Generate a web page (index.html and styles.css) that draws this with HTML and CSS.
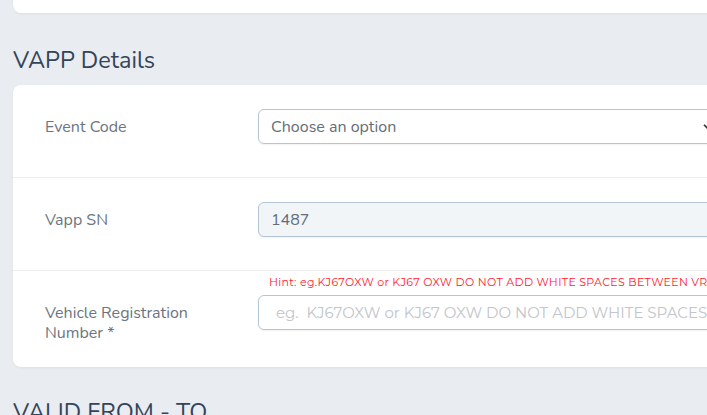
FILE: index.html
```html
<!DOCTYPE html>
<html>
<head>
<meta charset="utf-8">
<link rel="stylesheet" href="styles.css">
</head>
<body>
<div class="page">
  <div class="card card-top"></div>
  <h2 class="section-title">VAPP Details</h2>
  <div class="card">
    <div class="row">
      <label class="label">Event Code</label>
      <div class="field">
        <div class="control select">
          <span>Choose an option</span>
          <svg class="chev" width="9" height="7" viewBox="0 0 10 8"><path d="M1 2 L5 6 L9 2" fill="none" stroke="#333" stroke-width="2"/></svg>
        </div>
      </div>
    </div>
    <div class="row">
      <label class="label">Vapp SN</label>
      <div class="field">
        <div class="control readonly"><span>1487</span></div>
      </div>
    </div>
    <div class="row row-last">
      <label class="label">Vehicle Registration Number *</label>
      <div class="field">
        <div class="hint">Hint: eg.KJ67OXW or KJ67 OXW DO NOT ADD WHITE SPACES BETWEEN VRN CHARACTERS</div>
        <div class="control"><span class="ph">eg.&nbsp; KJ67OXW or KJ67 OXW DO NOT ADD WHITE SPACES BETWEEN VRN</span></div>
      </div>
    </div>
  </div>
  <h2 class="section-title second">VALID FROM - TO</h2>
</div>
</body>
</html>
```
FILE: styles.css
```css
html, body {
  margin: 0;
  padding: 0;
  background: #e9edf1;
  overflow: hidden;
}
body {
  font-family: "Nunito", "Open Sans", sans-serif;
}
.page {
  width: 737px;
  padding: 0 0 0 13px;
  margin-top: -20px;
}
.card {
  background: #fff;
  border-radius: 8px;
  box-shadow: 0 1px 3px rgba(0,0,0,0.06);
}
.card-top {
  height: 33px;
}
.section-title {
  margin: 0;
  font-family: "Nunito", "Open Sans", sans-serif;
  font-weight: 400;
  font-size: 23.5px;
  color: #34445a;
  padding: 33px 0 11px 0;
  line-height: 28px;
}
.section-title.second {
  padding-top: 31px;
}
.row {
  display: flex;
  align-items: center;
  padding: 24px 0 33px 32px;
  border-bottom: 1px solid #eceef0;
}
.row-last {
  border-bottom: none;
  padding: 5px 0 0 32px;
  height: 91px;
  align-items: flex-start;
}
.label {
  flex: 0 0 213px;
  font-size: 16px;
  color: #6b7580;
  line-height: 20px;
}
.row-last .label {
  flex: 0 0 170px;
  padding-top: 27px;
  margin-right: 43px;
}
.field {
  flex: 1;
  min-width: 0;
  padding-right: 25px;
}
.control {
  height: 33px;
  border: 1px solid #b4c6d6;
  border-radius: 6px;
  display: flex;
  align-items: center;
  padding: 0 12px;
  font-size: 16px;
  color: #646d78;
  box-shadow: 0 1px 2px rgba(0,0,0,0.06);
  overflow: hidden;
  white-space: nowrap;
}
.select {
  justify-content: space-between;
}
.readonly {
  background: #f1f5f8;
}
.hint {
  font-family: "Montserrat", "Open Sans", sans-serif;
  font-size: 11px;
  letter-spacing: 0.32px;
  color: #ff1a2e;
  white-space: nowrap;
  overflow: hidden;
  padding-left: 11px;
  line-height: 13px;
  margin-bottom: 6px;
}
.ph {
  font-family: "Montserrat", "Open Sans", sans-serif;
  font-size: 15px;
  letter-spacing: 0;
  color: #c2c5c9;
  padding-left: 5px;
}
```
